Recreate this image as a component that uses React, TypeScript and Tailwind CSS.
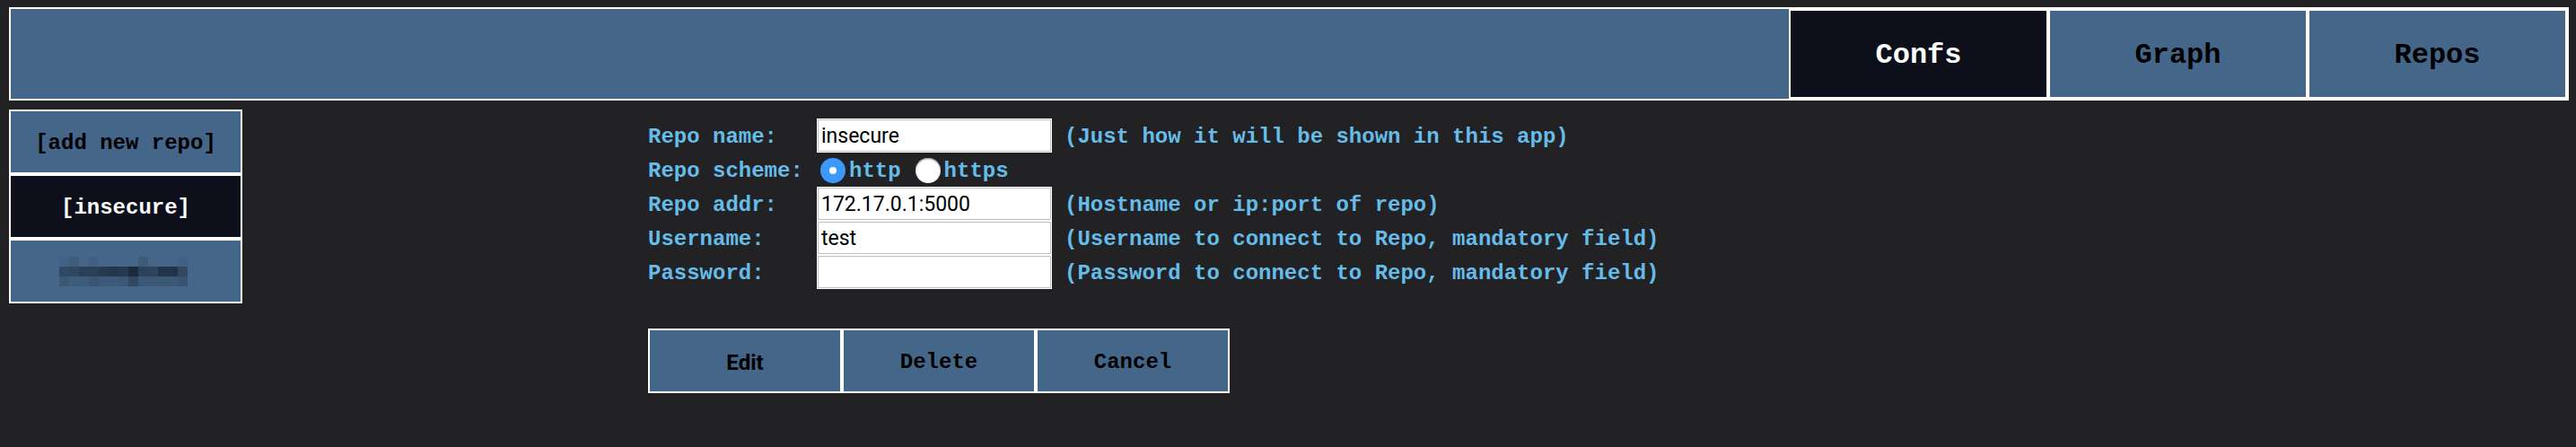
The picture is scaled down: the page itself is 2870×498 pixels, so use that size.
import { useState } from "react";

const mono = "font-['Courier_New','Liberation_Mono',monospace] font-bold";
const cell = "cursor-pointer border-2 border-white pt-1 text-center";

const mosaic = [
  ["#426386", "#3f5c7b", "#446688", "#416080", "#446688", "#446688", "#446688", "#446688", "#3e5b79", "#446688", "#446688", "#446688", "#416182"],
  ["#2f4a64", "#2f475f", "#2a4056", "#2a4055", "#26394f", "#243649", "#253c50", "#1b2938", "#2c4258", "#2d445c", "#233448", "#233448", "#304862"],
  ["#3a5874", "#3d5d7b", "#3d5d7b", "#395573", "#3c5978", "#3d5a78", "#3a5875", "#304762", "#3b5876", "#3b5875", "#3b5975", "#3b5975", "#385371"],
];

function Mosaic() {
  return (
    <svg width="143" height="33" viewBox="0 0 13 3" shapeRendering="crispEdges" aria-hidden="true">
      {mosaic.map((row, y) =>
        row.map((fill, x) => <rect key={`${x}-${y}`} x={x} y={y} width="1" height="1" fill={fill} />)
      )}
    </svg>
  );
}

function Tab({ label, active }: { label: string; active?: boolean }) {
  return (
    <button
      type="button"
      className={`${cell} w-[289px] text-[32px] ${active ? "bg-[#0d0f1b] text-white" : "bg-[#446688] text-black"}`}
    >
      {label}
    </button>
  );
}

const inputClass =
  "block h-[38px] w-[262px] border border-white bg-white px-1 font-['Roboto',sans-serif] text-[23px] font-normal text-black outline-1 -outline-offset-2 outline-[#bfbfbf]";

function Field({ id, label, value, hint, type = "text" }: { id: string; label: string; value: string; hint: string; type?: string }) {
  return (
    <>
      <label htmlFor={id} className="pt-1">{label}</label>
      <input id={id} type={type} defaultValue={value} className={inputClass} />
      <span className="pt-1 pl-[14px]">{hint}</span>
    </>
  );
}

function Scheme({ value, checked, onChange }: { value: string; checked: boolean; onChange: () => void }) {
  return (
    <label className="flex items-center gap-1">
      <input
        type="radio"
        name="scheme"
        value={value}
        checked={checked}
        onChange={onChange}
        className="size-7 appearance-none rounded-full bg-white shadow-[inset_0_1px_2px_#888888] checked:border-10 checked:border-[#3b99fc] checked:shadow-none"
      />
      <span className="pt-[2px]">{value}</span>
    </label>
  );
}

export default function App() {
  const [scheme, setScheme] = useState("http");
  return (
    <div className={`min-h-screen bg-[#222224] pt-2 pr-2 pl-[10px] text-[24px] leading-7 ${mono}`}>
      <nav className="flex h-[104px] justify-end border-2 border-white bg-[#446688]">
        <Tab label="Confs" active />
        <Tab label="Graph" />
        <Tab label="Repos" />
      </nav>
      <div className="flex pt-[10px]">
        <aside className="flex w-[260px] shrink-0 flex-col">
          <button type="button" className={`${cell} h-[72px] bg-[#446688] text-black`}>[add new repo]</button>
          <button type="button" className={`${cell} h-[72px] bg-[#0d0f1b] text-white`}>[insecure]</button>
          <button
            type="button"
            aria-label="Hidden repo"
            className="flex h-[72px] cursor-pointer items-center border-2 border-white bg-[#446688] pl-[54px]"
          >
            <Mosaic />
          </button>
        </aside>
        <form className="ml-[452px] pt-[10px]" onSubmit={(e) => e.preventDefault()}>
          <div className="grid auto-rows-[38px] grid-cols-[188px_262px_auto] items-center text-[#66bce8]">
            <Field id="name" label="Repo name:" value="insecure" hint="(Just how it will be shown in this app)" />
            <span className="pt-1">Repo scheme:</span>
            <div role="radiogroup" aria-label="Repo scheme" className="col-span-2 flex gap-4 pt-[2px] pl-1">
              <Scheme value="http" checked={scheme === "http"} onChange={() => setScheme("http")} />
              <Scheme value="https" checked={scheme === "https"} onChange={() => setScheme("https")} />
            </div>
            <Field id="addr" label="Repo addr:" value="172.17.0.1:5000" hint="(Hostname or ip:port of repo)" />
            <Field id="user" label="Username:" value="test" hint="(Username to connect to Repo, mandatory field)" />
            <Field id="pass" type="password" label="Password:" value="" hint="(Password to connect to Repo, mandatory field)" />
          </div>
          <div className="mt-11 flex text-black">
            <button type="submit" className={`${cell} h-[72px] w-[216px] bg-[#446688] font-['Roboto',sans-serif]`}>Edit</button>
            <button type="button" className={`${cell} h-[72px] w-[216px] bg-[#446688]`}>Delete</button>
            <button type="button" className={`${cell} h-[72px] w-[216px] bg-[#446688]`}>Cancel</button>
          </div>
        </form>
      </div>
    </div>
  );
}
